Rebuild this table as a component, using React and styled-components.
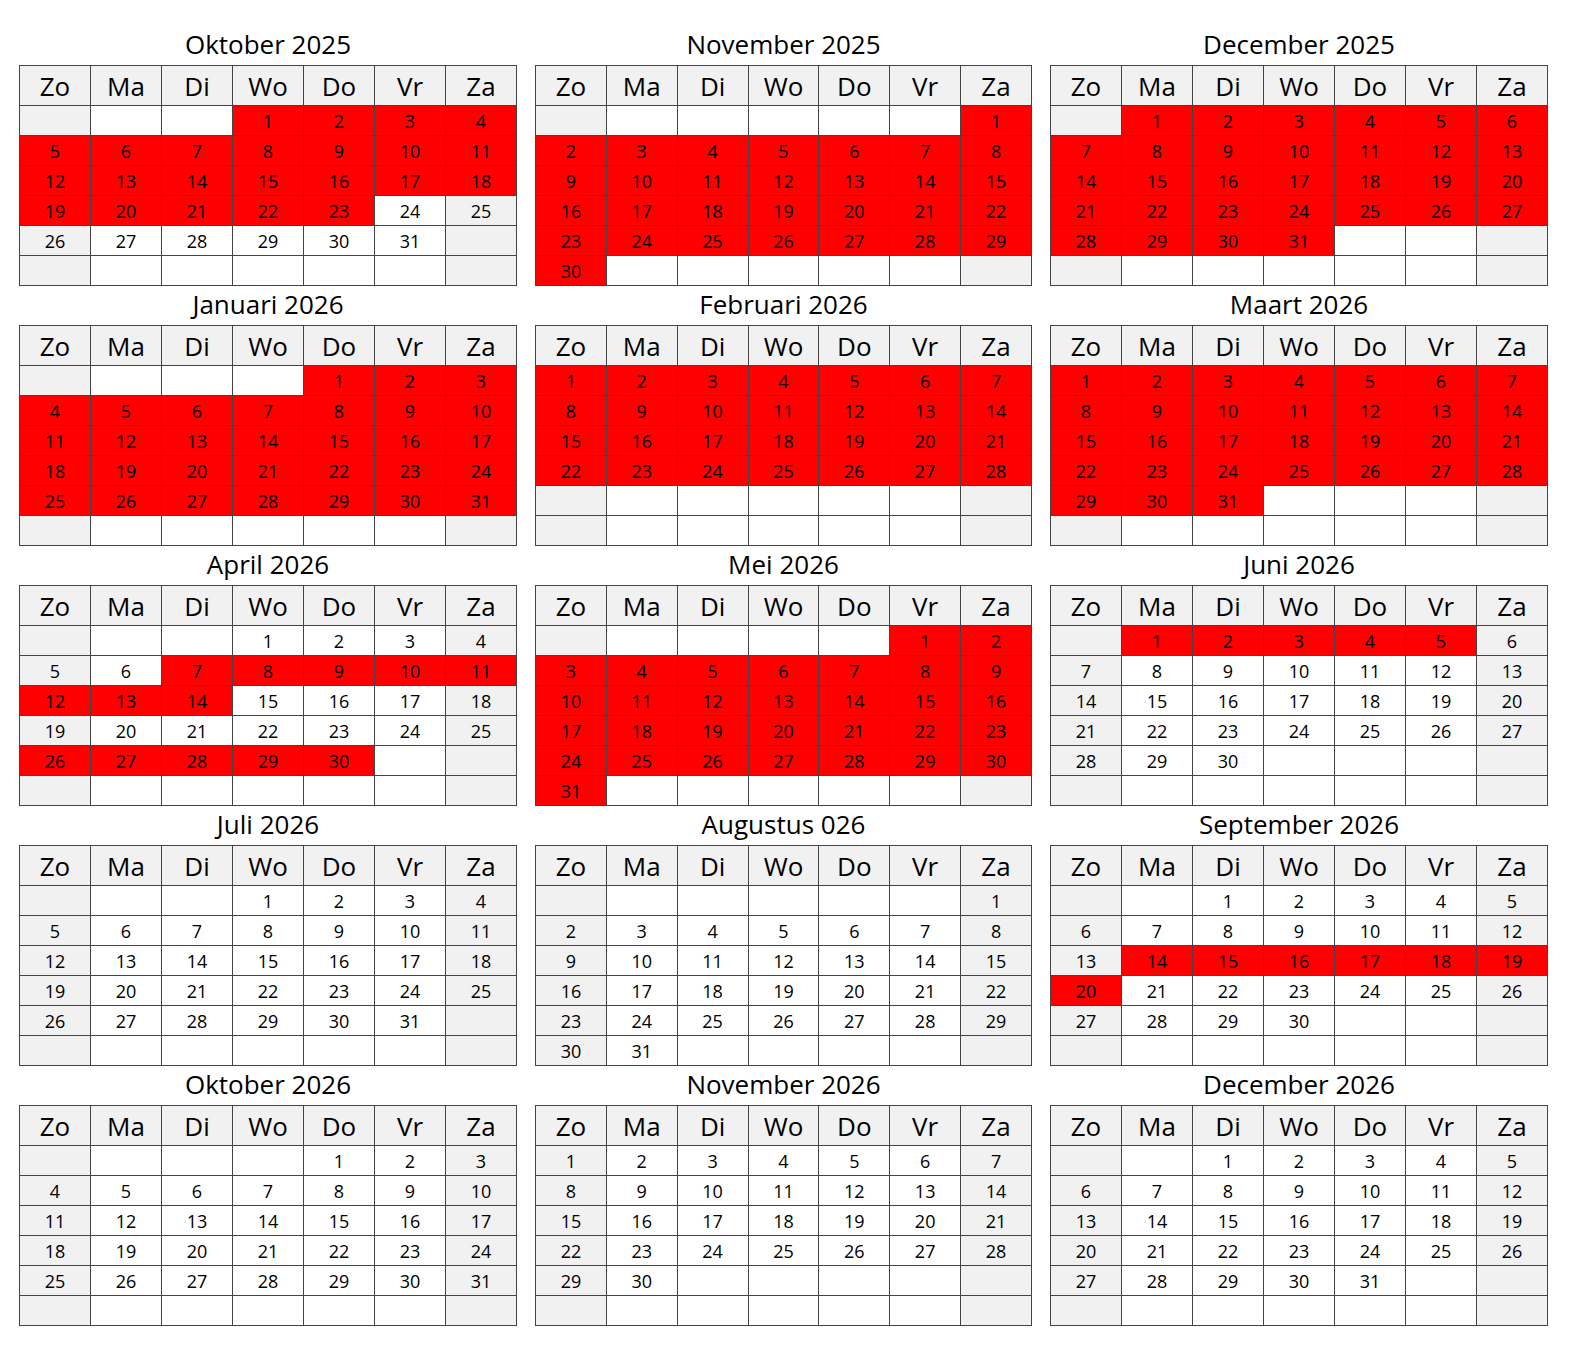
import React from "react";
import styled, { createGlobalStyle } from "styled-components";

const GlobalStyle = createGlobalStyle`
  body {
    margin: 0;
    background: #ffffff;
    font-family: "Open Sans", "DejaVu Sans", sans-serif;
    color: #000000;
  }
`;

const Page = styled.div`
  padding: 26px 0 0 19px;
  display: grid;
  grid-template-columns: 498px 497px 498px;
  column-gap: 18px;
`;

const Month = styled.div`
  display: flex;
  flex-direction: column;
`;

const Title = styled.div`
  height: 39px;
  line-height: 36px;
  font-size: 26px;
  text-align: center;
`;

const Table = styled.table`
  width: 100%;
  border-collapse: collapse;
  table-layout: fixed;
`;

const HeadCell = styled.th`
  height: 39px;
  padding: 0;
  border: 1px solid #444;
  background: #f1f1f1;
  font-size: 26px;
  line-height: 30px;
  font-weight: 400;
  text-align: center;
`;

const Row = styled.tr`
  height: 30px;
`;

const Cell = styled.td`
  height: 29px;
  padding: 0;
  border: 1px solid #444;
  text-align: center;
  font-size: 18px;
  line-height: 24px;
  background: ${p => (p.$red ? "#ff0000" : p.$weekend ? "#f1f1f1" : "#ffffff")};
`;

const DAYS = ["Zo", "Ma", "Di", "Wo", "Do", "Vr", "Za"];

// start = weekday of the 1st (0 = zondag), red = ranges of days marked
const MONTHS = [
  { title: "Oktober 2025", start: 3, len: 31, red: [[1, 23]] },
  { title: "November 2025", start: 6, len: 30, red: [[1, 30]] },
  { title: "December 2025", start: 1, len: 31, red: [[1, 31]] },
  { title: "Januari 2026", start: 4, len: 31, red: [[1, 31]] },
  { title: "Februari 2026", start: 0, len: 28, red: [[1, 28]] },
  { title: "Maart 2026", start: 0, len: 31, red: [[1, 31]] },
  { title: "April 2026", start: 3, len: 30, red: [[7, 14], [26, 30]] },
  { title: "Mei 2026", start: 5, len: 31, red: [[1, 31]] },
  { title: "Juni 2026", start: 1, len: 30, red: [[1, 5]] },
  { title: "Juli 2026", start: 3, len: 31, red: [] },
  { title: "Augustus 026", start: 6, len: 31, red: [] },
  { title: "September 2026", start: 2, len: 30, red: [[14, 20]] },
  { title: "Oktober 2026", start: 4, len: 31, red: [] },
  { title: "November 2026", start: 0, len: 30, red: [] },
  { title: "December 2026", start: 2, len: 31, red: [] }
];

function CalendarMonth({ month }) {
  const isRed = d => month.red.some(([a, b]) => d >= a && d <= b);
  const rows = [];
  for (let r = 0; r < 6; r++) {
    const cells = [];
    for (let c = 0; c < 7; c++) {
      const day = r * 7 + c - month.start + 1;
      const valid = day >= 1 && day <= month.len;
      cells.push(
        <Cell key={c} $weekend={c === 0 || c === 6} $red={valid && isRed(day)}>
          {valid ? day : ""}
        </Cell>
      );
    }
    rows.push(<Row key={r}>{cells}</Row>);
  }
  return (
    <Month>
      <Title>{month.title}</Title>
      <Table>
        <thead>
          <tr>
            {DAYS.map(d => (
              <HeadCell key={d}>{d}</HeadCell>
            ))}
          </tr>
        </thead>
        <tbody>{rows}</tbody>
      </Table>
    </Month>
  );
}

export default function App() {
  return (
    <>
      <GlobalStyle />
      <Page>
        {MONTHS.map(m => (
          <CalendarMonth key={m.title} month={m} />
        ))}
      </Page>
    </>
  );
}
